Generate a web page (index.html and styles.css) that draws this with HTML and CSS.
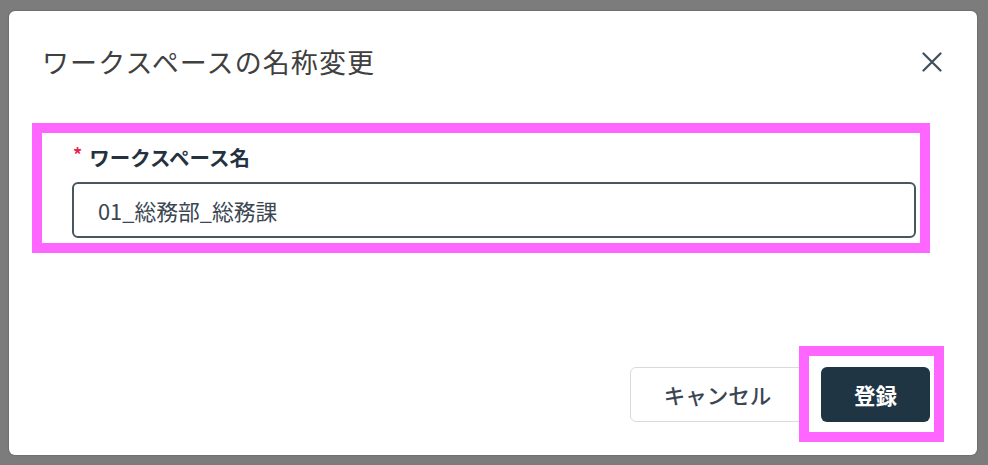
FILE: index.html
```html
<!DOCTYPE html>
<html lang="ja">
<head>
<meta charset="utf-8">
<title>ワークスペースの名称変更</title>
<link rel="stylesheet" href="styles.css">
</head>
<body>
<div class="backdrop">
  <div class="dialog">
    <div class="dialog-header">
      <h1 class="dialog-title">ワークスペースの名称変更</h1>
      <button class="close-btn" aria-label="閉じる">
        <svg width="20" height="20" viewBox="0 0 20 20"><path d="M1.5 1.5 L18.5 18.5 M18.5 1.5 L1.5 18.5" stroke="#3e4f5b" stroke-width="2.2" stroke-linecap="round" fill="none"/></svg>
      </button>
    </div>
    <div class="highlight">
      <label class="field-label"><span class="required">*</span>ワークスペース名</label>
      <div class="text-input">01_総務部_総務課</div>
    </div>
    <div class="dialog-footer">
      <button class="btn btn-cancel">キャンセル</button>
      <button class="btn btn-primary">登録</button>
    </div>
  </div>
</div>
</body>
</html>
```
FILE: styles.css
```css
html, body {
  margin: 0;
  padding: 0;
}
body {
  background: #7c7c7c;
  font-family: "Noto Sans CJK JP", "Noto Sans", sans-serif;
  width: 988px;
  height: 465px;
  overflow: hidden;
}
.backdrop {
  padding: 11px 11px 10px 9px;
  height: 444px;
}
.dialog {
  background: #ffffff;
  width: 968px;
  height: 444px;
  border-radius: 6px;
  box-shadow: 0 0 2px rgba(0,0,0,0.35);
  display: flex;
  flex-direction: column;
}
.dialog-header {
  display: flex;
  align-items: center;
  justify-content: space-between;
  padding: 33px 35px 0 33px;
  height: 36px;
}
.dialog-title {
  margin: 0;
  font-size: 27px;
  line-height: 36px;
  font-weight: 400;
  color: #404040;
  letter-spacing: 1.1px;
}
.close-btn {
  border: 0;
  background: none;
  padding: 0;
  width: 20px;
  height: 20px;
  display: flex;
  margin-top: -1px;
}
.highlight {
  margin: 43px 47px 0 23px;
  border: 10px solid #ff66ff;
  padding: 10px 4px 5px 30px;
  display: flex;
  flex-direction: column;
  gap: 11px;
}
.field-label {
  font-size: 20.5px;
  line-height: 28px;
  font-weight: 700;
  color: #243140;
  display: flex;
  align-items: flex-start;
  padding-left: 1px;
}
.required {
  color: #e3284d;
  font-size: 18px;
  font-weight: 700;
  line-height: 22px;
  margin-right: 7px;
}
.text-input {
  height: 52px;
  border: 2px solid #47565f;
  border-radius: 6px;
  padding: 0 24px;
  display: flex;
  align-items: center;
  font-size: 21.8px;
  color: #3b4652;
}
.dialog-footer {
  display: flex;
  justify-content: flex-end;
  gap: 16px;
  margin-top: 114px;
  padding-right: 47px;
}
.btn {
  height: 55px;
  border-radius: 6px;
  font-family: "Noto Sans CJK JP", "Noto Sans", sans-serif;
  font-size: 21.5px;
  font-weight: 500;
  padding: 0;
}
.btn-cancel {
  width: 175px;
  background: #ffffff;
  border: 1px solid #d6dbe2;
  color: #3b4652;
}
.btn-primary {
  width: 109px;
  background: #1f3543;
  border: 0;
  color: #ffffff;
  font-weight: 700;
  position: relative;
}
.btn-primary::after {
  content: "";
  position: absolute;
  top: -21px;
  right: -14px;
  bottom: -20px;
  left: -22px;
  border: 10px solid #ff66ff;
}
```
